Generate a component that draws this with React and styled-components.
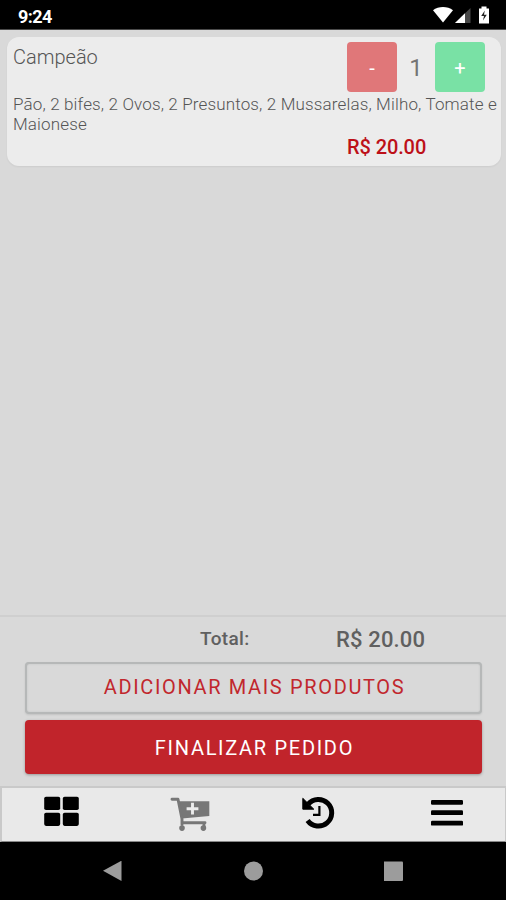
import React from "react";
import styled, { createGlobalStyle } from "styled-components";

const GlobalStyle = createGlobalStyle`
  *, *::before, *::after { box-sizing: border-box; }
  body { margin: 0; background: #d9d9d9; }
  button { font: inherit; border: 0; padding: 0; margin: 0; }
`;

const Screen = styled.div`
  width: 506px;
  height: 900px;
  display: flex;
  flex-direction: column;
  overflow: hidden;
  background: #d9d9d9;
  color: #747474;
  font-family: Roboto, "Liberation Sans", sans-serif;
`;

const StatusBar = styled.header`
  height: 30px;
  flex: none;
  display: flex;
  justify-content: space-between;
  padding: 0 14px 0 18px;
  background: #000;
  border-bottom: 1px solid #4a4a4a;
`;

const Clock = styled.span`
  color: #fff;
  font-size: 18px;
  font-weight: 700;
  line-height: 33px;
  letter-spacing: -0.6px;
`;

const StatusIcons = styled.svg`
  width: 60px;
  height: 29px;
  display: block;
`;

const OrderList = styled.main`
  height: 585px;
  flex: none;
  padding: 7px 5px 0 7px;
`;

const ItemCard = styled.article`
  height: 129px;
  padding: 5px 4px 0 6px;
  border-radius: 12px;
  background: #ececec;
  box-shadow: 0 1px 2px rgba(0, 0, 0, 0.06);
`;

const ItemHeader = styled.div`
  display: flex;
  justify-content: space-between;
  height: 52px;
  padding-right: 12px;
`;

const ItemName = styled.h2`
  margin: 0;
  font-size: 20px;
  font-weight: 300;
  color: #555;
  line-height: 30px;
  letter-spacing: 0;
`;

const Stepper = styled.div`
  display: grid;
  grid-template-columns: 50px 38px 50px;
  height: 50px;
`;

const StepButton = styled.button`
  height: 50px;
  padding-top: 2px;
  border-radius: 4px;
  background: ${(p) => p.$tone};
  color: #fff;
  font-size: 20px;
`;

const Quantity = styled.span`
  text-align: center;
  font-size: 24px;
  line-height: 53px;
`;

const Description = styled.p`
  margin: 0;
  width: 490px;
  font-size: 17px;
  font-weight: 300;
  color: #555;
  line-height: 20px;
  letter-spacing: 0.145px;
`;

const ItemPrice = styled.div`
  margin: 3px 0 0 334px;
  font-size: 20px;
  font-weight: 500;
  line-height: 20px;
  letter-spacing: -0.1px;
  color: #bd1018;
`;

const Footer = styled.section`
  height: 171px;
  flex: none;
  padding: 0 24px 0 25px;
  border-top: 2px solid #cfcfcf;
`;

const TotalRow = styled.div`
  display: grid;
  grid-template-columns: 136px 1fr;
  height: 45px;
  padding-left: 175px;
  font-weight: 500;
  color: #606060;
  line-height: 43px;
`;

const TotalLabel = styled.span`
  font-size: 19px;
  letter-spacing: 0.35px;
`;

const TotalValue = styled.span`
  font-size: 22px;
  line-height: 46px;
  letter-spacing: 0.15px;
`;

const ActionButton = styled.button`
  display: block;
  width: 457px;
  border-radius: 4px;
  font-size: 20px;
  color: ${(p) => (p.$filled ? "#fff" : "#c1272d")};
  background: ${(p) => (p.$filled ? "#c1242b" : "#d9d9d9")};
  height: ${(p) => (p.$filled ? "54px" : "52px")};
  margin-top: ${(p) => (p.$filled ? "6px" : "0")};
  letter-spacing: ${(p) => (p.$filled ? "1.7px" : "1.65px")};
  padding: ${(p) => (p.$filled ? "2px 0 0 2px" : "0 0 3px 2px")};
  box-shadow: ${(p) =>
    p.$filled
      ? "0 1px 3px rgba(0, 0, 0, 0.3)"
      : "inset 0 0 0 2px #b6b8b8, inset 0 0 2px 2px #bfc1c1, 0 1px 2px rgba(0, 0, 0, 0.1)"};
`;

const TabBar = styled.nav`
  height: 56px;
  flex: none;
  display: grid;
  grid-template-columns: 122px 134px 124px 126px;
  border: 1px solid #c9c9c9;
  border-width: 2px 1px 1px 2px;
  border-bottom-color: #888;
  background: #e9e9e9;
`;

const TabIcon = styled.svg`
  display: block;
  width: 40px;
  height: 40px;
  margin: 4px 0 0 ${(p) => p.$offset}px;
`;

const SystemNav = styled.footer`
  height: 58px;
  flex: none;
  display: flex;
  justify-content: space-between;
  padding: 19px 102px 0;
  background: #000;
`;

const SystemIcon = styled.svg`
  width: 20px;
  height: 20px;
  display: block;
  fill: #9c9c9c;
`;

export default function App() {
  return (
    <>
      <GlobalStyle />
      <Screen>
        <StatusBar>
          <Clock>9:24</Clock>
          <StatusIcons viewBox="432 0 60 29" aria-hidden="true">
            <path d="M433 10.2C438.5 5.9 447.5 5.9 453 10.2L443 22.5Z" fill="#fff" />
            <path d="M455 23L470.5 8V23Z" fill="#484848" />
            <path d="M455 23L465 13.3V23Z" fill="#fff" />
            <path d="M479 8.5H481.5V6.5H486.5V8.5H489V23.5H479Z" fill="#fff" />
            <path d="M484.8 10.5L481.2 16H484L483 20.5L486.8 14.7H484Z" fill="#222" />
          </StatusIcons>
        </StatusBar>

        <OrderList>
          <ItemCard>
            <ItemHeader>
              <ItemName>Campeão</ItemName>
              <Stepper>
                <StepButton $tone="#e07779">-</StepButton>
                <Quantity>1</Quantity>
                <StepButton $tone="#79e1a5">+</StepButton>
              </Stepper>
            </ItemHeader>
            <Description>
              Pão, 2 bifes, 2 Ovos, 2 Presuntos, 2 Mussarelas, Milho, Tomate e Maionese
            </Description>
            <ItemPrice>R$ 20.00</ItemPrice>
          </ItemCard>
        </OrderList>

        <Footer>
          <TotalRow>
            <TotalLabel>Total:</TotalLabel>
            <TotalValue>R$ 20.00</TotalValue>
          </TotalRow>
          <ActionButton>ADICIONAR MAIS PRODUTOS</ActionButton>
          <ActionButton $filled>FINALIZAR PEDIDO</ActionButton>
        </Footer>

        <TabBar>
          <TabIcon $offset={39} viewBox="41 792 40 40">
            <rect x="44.2" y="796.8" width="16" height="13.2" rx="1.8" />
            <rect x="62.8" y="796.8" width="16" height="13.2" rx="1.8" />
            <rect x="44.2" y="812.7" width="16" height="13.2" rx="1.8" />
            <rect x="62.8" y="812.7" width="16" height="13.2" rx="1.8" />
          </TabIcon>
          <TabIcon $offset={46} viewBox="170 792 40 40">
            <path d="M178.5 801.2H209.3V816L182 818.4Z" fill="#777" />
            <path
              d="M172 799.3H178L182 819V824.5M182 822.8H205M204 822.8V827"
              fill="none"
              stroke="#777"
              strokeWidth="2.9"
              strokeLinecap="round"
              strokeLinejoin="round"
            />
            <circle cx="182" cy="828.1" r="2.8" fill="#777" />
            <circle cx="203.4" cy="828.1" r="2.8" fill="#777" />
            <path d="M192.5 802.8V814.6M186.6 808.7H198.4" stroke="#ececec" strokeWidth="2.9" />
          </TabIcon>
          <TabIcon $offset={40} viewBox="298 792 40 40">
            <path
              d="M308.2 804.2A13.3 13.3 0 1 1 307.6 820.5"
              fill="none"
              stroke="#000"
              strokeWidth="5"
            />
            <path d="M302.8 798.3L313.8 809.2H302.8Z" stroke="#000" strokeWidth="1" strokeLinejoin="round" />
            <path d="M319.4 806V814.8H313" fill="none" stroke="#000" strokeWidth="2.2" />
          </TabIcon>
          <TabIcon $offset={45} viewBox="427 792 40 40">
            <rect x="431" y="800" width="32" height="4.8" rx="1.2" />
            <rect x="431" y="810.3" width="32" height="4.8" rx="1.2" />
            <rect x="431" y="820.8" width="32" height="4.8" rx="1.2" />
          </TabIcon>
        </TabBar>

        <SystemNav>
          <SystemIcon viewBox="0 0 20 20">
            <path d="M1 9.8L19.5 -0.3V20Z" />
          </SystemIcon>
          <SystemIcon viewBox="0 0 20 20">
            <circle cx="10.5" cy="10" r="9.5" />
          </SystemIcon>
          <SystemIcon viewBox="0 0 20 20">
            <rect x="-0.5" y="0.5" width="19.5" height="19.5" rx="1" />
          </SystemIcon>
        </SystemNav>
      </Screen>
    </>
  );
}
